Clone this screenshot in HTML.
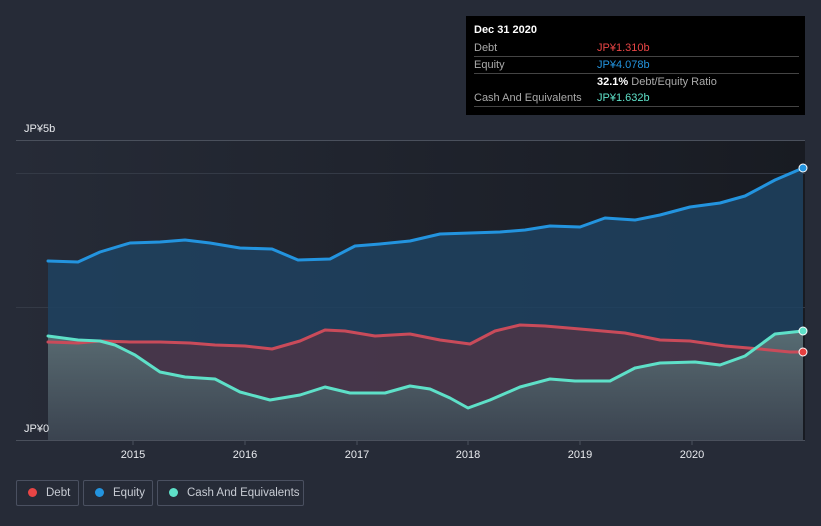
<!DOCTYPE html>
<html><head><meta charset="utf-8"><style>
body{margin:0;width:821px;height:526px;background:#262b37;overflow:hidden;font-family:"Liberation Sans",sans-serif;position:relative}
.tt{position:absolute;left:466px;top:16px;width:339px;height:99px;background:#000;color:#fff;font-size:11px}
.tt .r{position:absolute;left:8px;right:6px;border-bottom:1px solid #444;height:16px}
.tt .l{color:#aaa;position:absolute;left:0;top:2px}
.tt .v{position:absolute;left:123px;top:2px}
.leg{position:absolute;top:480px;height:26px;border:1px solid #4a5060;border-radius:2px;color:#c8ccd4;font-size:11.5px;line-height:25px;box-sizing:border-box;white-space:nowrap}
.leg i{display:inline-block;width:9px;height:9px;border-radius:50%;margin:0 9px 0 11px;vertical-align:-1px}
</style></head><body>
<svg width="821" height="526" style="position:absolute;left:0;top:0">
<defs>
<linearGradient id="bg" x1="0" x2="1" y1="0" y2="0"><stop offset="0" stop-color="#262b37"/><stop offset="1" stop-color="#181b22"/></linearGradient>
<linearGradient id="cg" x1="0" x2="0" y1="0" y2="1"><stop offset="0" stop-color="#5a6e74"/><stop offset="1" stop-color="#3a4450"/></linearGradient>
</defs>
<rect x="16" y="140" width="789" height="300" fill="url(#bg)"/>
<line x1="16" y1="140.5" x2="805" y2="140.5" stroke="#4a505c"/>
<line x1="16" y1="173.5" x2="805" y2="173.5" stroke="#343a46"/>
<line x1="16" y1="307.5" x2="805" y2="307.5" stroke="#343a46"/>
<polygon fill="#1e4260" fill-opacity="0.85" points="48,440 48,261 78,262 100,252 130,243 160,242 185,240 210,243 240,248 272,249 298,260 330,259 355,246 380,244 410,241 440,234 470,233 500,232 525,230 550,226 580,227 605,218 635,220 660,215 690,207 720,203 745,196 775,180 803,168 803,440"/>
<polygon fill="#4a3548" fill-opacity="0.9" points="48,440 48,342 78,343 100,341 130,342 160,342 190,343 215,345 245,346 272,349 300,341 325,330 345,331 375,336 410,334 440,340 470,344 495,331 520,325 545,326 580,329 625,333 660,340 690,341 725,346 760,349 790,352 803,352 803,440"/>
<polygon fill="url(#cg)" fill-opacity="0.95" points="48,440 48,336 78,340 100,341 115,345 135,355 160,372 185,377 215,379 240,392 270,400 300,395 325,387 350,393 385,393 410,386 430,389 450,398 468,408 490,400 520,387 550,379 575,381 610,381 635,368 660,363 695,362 720,365 745,356 775,334 803,331 803,440"/>
<g fill="none" stroke-width="3" stroke-linejoin="round" stroke-linecap="round">
<polyline stroke="#2394df" points="48,261 78,262 100,252 130,243 160,242 185,240 210,243 240,248 272,249 298,260 330,259 355,246 380,244 410,241 440,234 470,233 500,232 525,230 550,226 580,227 605,218 635,220 660,215 690,207 720,203 745,196 775,180 803,168"/>
<polyline stroke="#c94b5a" points="48,342 78,343 100,341 130,342 160,342 190,343 215,345 245,346 272,349 300,341 325,330 345,331 375,336 410,334 440,340 470,344 495,331 520,325 545,326 580,329 625,333 660,340 690,341 725,346 760,349 790,352 803,352"/>
<polyline stroke="#5ee0c8" points="48,336 78,340 100,341 115,345 135,355 160,372 185,377 215,379 240,392 270,400 300,395 325,387 350,393 385,393 410,386 430,389 450,398 468,408 490,400 520,387 550,379 575,381 610,381 635,368 660,363 695,362 720,365 745,356 775,334 803,331"/>
</g>
<circle cx="803" cy="168" r="4" fill="#2394df" stroke="#fff"/>
<circle cx="803" cy="331" r="4" fill="#5ee0c8" stroke="#fff"/>
<circle cx="803" cy="352" r="4" fill="#e64040" stroke="#fff"/>
<line x1="16" y1="440.5" x2="805" y2="440.5" stroke="#4a505c"/>
<g stroke="#4a505c"><line x1="133" y1="440" x2="133" y2="445"/><line x1="245" y1="440" x2="245" y2="445"/><line x1="357" y1="440" x2="357" y2="445"/><line x1="468" y1="440" x2="468" y2="445"/><line x1="580" y1="440" x2="580" y2="445"/><line x1="692" y1="440" x2="692" y2="445"/></g>
<g fill="#e8eaee" font-size="11" font-family="Liberation Sans,sans-serif" text-anchor="middle">
<text x="133" y="458">2015</text><text x="245" y="458">2016</text><text x="357" y="458">2017</text><text x="468" y="458">2018</text><text x="580" y="458">2019</text><text x="692" y="458">2020</text>
<text x="24" y="132" text-anchor="start">JP¥5b</text><text x="24" y="432" text-anchor="start">JP¥0</text>
</g>
</svg>
<div class="tt">
<div style="position:absolute;left:8px;top:8px;font-weight:bold">Dec 31 2020</div>
<div class="r" style="top:24px"><span class="l">Debt</span><span class="v" style="color:#e84545">JP¥1.310b</span></div>
<div class="r" style="top:41px"><span class="l">Equity</span><span class="v" style="color:#2394df">JP¥4.078b</span></div>
<div class="r" style="top:58px;border:none"><span class="v"><b>32.1%</b> <span style="color:#aaa">Debt/Equity Ratio</span></span></div>
<div class="r" style="top:74px"><span class="l">Cash And Equivalents</span><span class="v" style="color:#5ee0c8">JP¥1.632b</span></div>
</div>
<div class="leg" style="left:16px;width:63px"><i style="background:#e84545"></i>Debt</div>
<div class="leg" style="left:83px;width:70px"><i style="background:#2394df"></i>Equity</div>
<div class="leg" style="left:157px;width:147px"><i style="background:#5ee0c8"></i>Cash And Equivalents</div>
</body></html>
